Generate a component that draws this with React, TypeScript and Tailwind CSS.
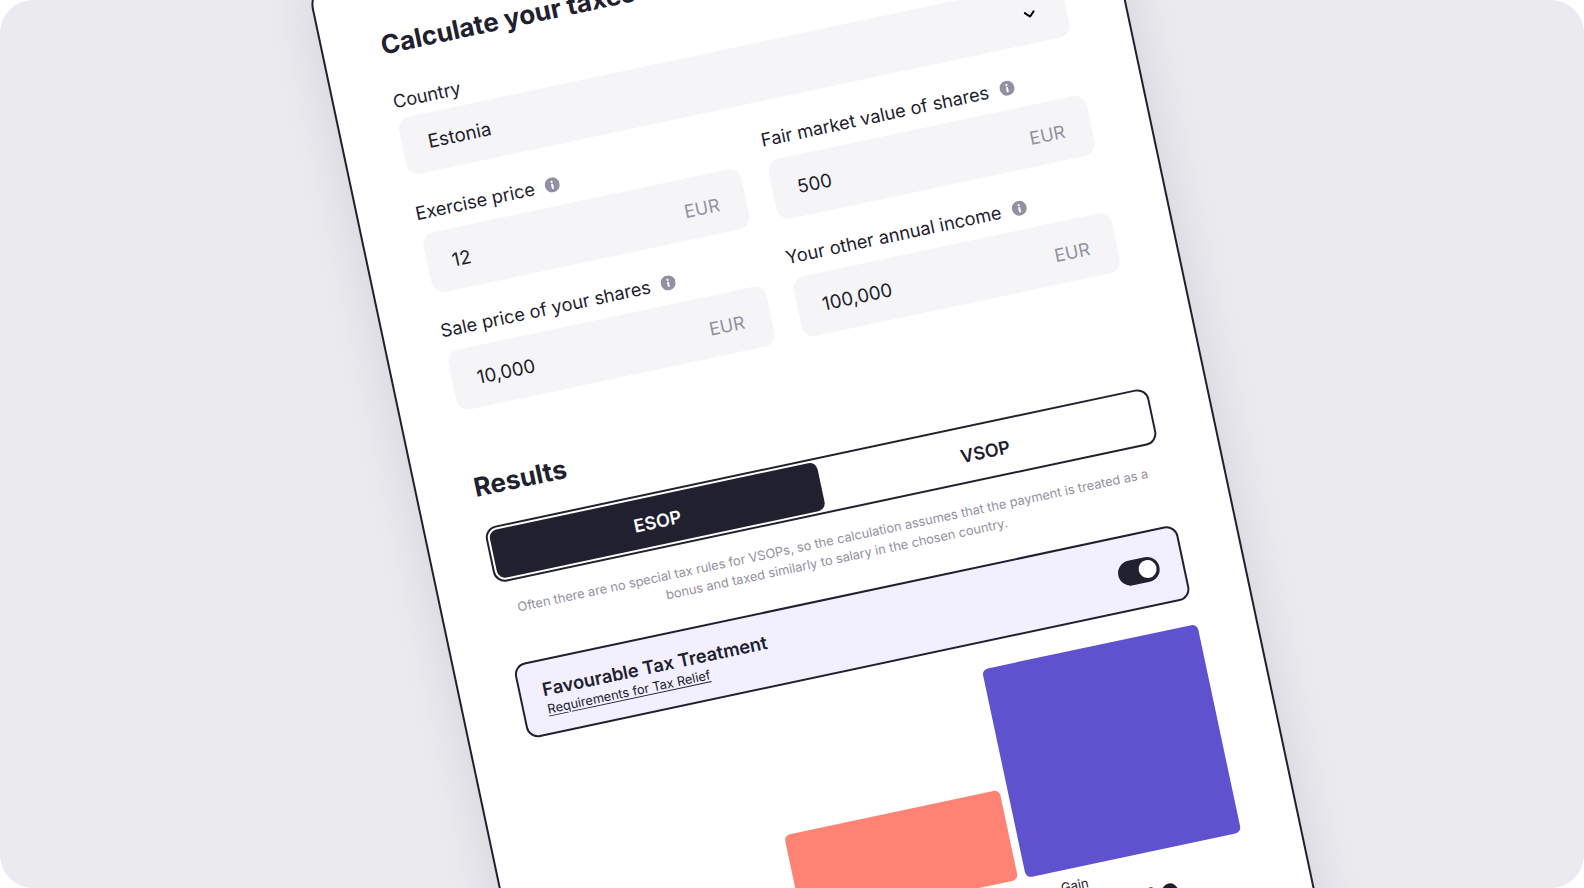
import React from 'react';
import { ChevronDown } from 'lucide-react';

const font = { fontFamily: 'Inter, sans-serif' };

const InfoDot = () => (
  <svg width="15" height="15" viewBox="0 0 16 16">
    <circle cx="8" cy="8" r="8" fill="#9391a1" />
    <circle cx="8" cy="4.6" r="1.2" fill="#fff" />
    <rect x="6.9" y="6.8" width="2.2" height="5.6" rx="0.6" fill="#fff" />
  </svg>
);

const Field: React.FC<{ label: string; value: string }> = ({ label, value }) => (
  <div className="flex flex-col">
    <div className="flex items-center gap-[11px] h-[24px] mb-[10px] -ml-px">
      <span className="text-[18.2px] leading-[24px] text-[#21202e]">{label}</span>
      <InfoDot />
    </div>
    <div className="flex items-center justify-between h-[61px] pt-[3px] rounded-xl bg-[#f5f5f7] pl-[25px] pr-[27px]">
      <span className="text-[18.7px] text-[#21202e]">{value}</span>
      <span className="text-[18px] text-[#9391a1]">EUR</span>
    </div>
  </div>
);

export default function App() {
  return (
    <div className="w-[1584px] h-[888px] bg-white overflow-hidden" style={font}>
      <div className="relative w-full h-full bg-[#eaeaef] rounded-[33px] overflow-hidden">
        <div className="absolute left-[307px] top-[-14px] w-[798px] h-[1300px] origin-top-left rotate-[-12deg] bg-white border-2 border-[#21202e] rounded-[24px] shadow-[0_0_48px_rgba(33,32,46,0.12)] px-[58px] pt-[54px]">
          <h2 className="text-[26px] leading-[36px] font-bold text-[#21202e]">Calculate your taxes</h2>

          <div className="mt-[27px] flex flex-col">
            <span className="text-[18.2px] leading-[24px] text-[#21202e] mb-[6px]">Country</span>
            <div className="flex items-center justify-between h-[58px] rounded-xl bg-[#f5f5f7] pl-[26px] pr-7">
              <span className="text-[18.7px] text-[#21202e]">Estonia</span>
              <ChevronDown size={18} strokeWidth={2.6} className="text-black" />
            </div>
          </div>

          <div className="mt-[26px] grid grid-cols-2 gap-x-[28px] gap-y-[25px]">
            <Field label="Exercise price" value="12" />
            <Field label="Fair market value of shares" value="500" />
            <Field label="Sale price of your shares" value="10,000" />
            <Field label="Your other annual income" value="100,000" />
          </div>

          <div className="mt-[60px] -ml-px text-[26px] leading-[36px] font-bold text-[#21202e]">Results</div>

          <div className="mt-[23px] flex h-[57px] rounded-xl border-2 border-[#21202e] p-[2px]">
            <div className="flex-1 flex items-center justify-center pt-[2px] rounded-lg bg-[#21202e] text-white text-[18px] font-semibold">ESOP</div>
            <div className="flex-1 flex items-center justify-center pt-[2px] text-[#21202e] text-[18px] font-semibold">VSOP</div>
          </div>

          <p className="mt-[18px] px-2 text-center text-[12.85px] leading-[19px] text-[#9391a1]">
            Often there are no special tax rules for VSOPs, so the calculation assumes that the payment is treated as a bonus and taxed similarly to salary in the chosen country.
          </p>

          <div className="mt-[27px] flex items-center justify-between h-[76px] rounded-xl border-2 border-[#21202e] bg-[#f2f0fe] pl-[22px] pr-[23px]">
            <div className="flex flex-col">
              <span className="text-[18.3px] leading-[24px] font-semibold text-[#21202e]">Favourable Tax Treatment</span>
              <a className="mt-px ml-px text-[12.8px] leading-[16px] text-[#21202e] underline underline-offset-2">Requirements for Tax Relief</a>
            </div>
            <div className="flex items-center justify-end w-[42px] h-[25px] rounded-full bg-[#21202e] px-[3px]">
              <div className="w-[18px] h-[18px] rounded-full bg-white"></div>
            </div>
          </div>

          <div className="mt-[26px] flex items-end justify-end gap-[8px]">
            <div className="w-[220px] h-[92px] rounded-md bg-[#ff8374]"></div>
            <div className="w-[220px] h-[213px] rounded-md bg-[#5f52cf]"></div>
          </div>

          <div className="mt-[9px] pl-[490px] text-[13px] leading-[16px] text-[#21202e]">Gain</div>
          <div className="mt-[10px] pl-[572px] flex items-start gap-[6px]">
            <div className="w-[10px] h-[10px] rounded-full bg-[#21202e]"></div>
            <div className="w-[16px] h-[16px] rounded-full bg-[#21202e]"></div>
          </div>
        </div>
      </div>
    </div>
  );
}
